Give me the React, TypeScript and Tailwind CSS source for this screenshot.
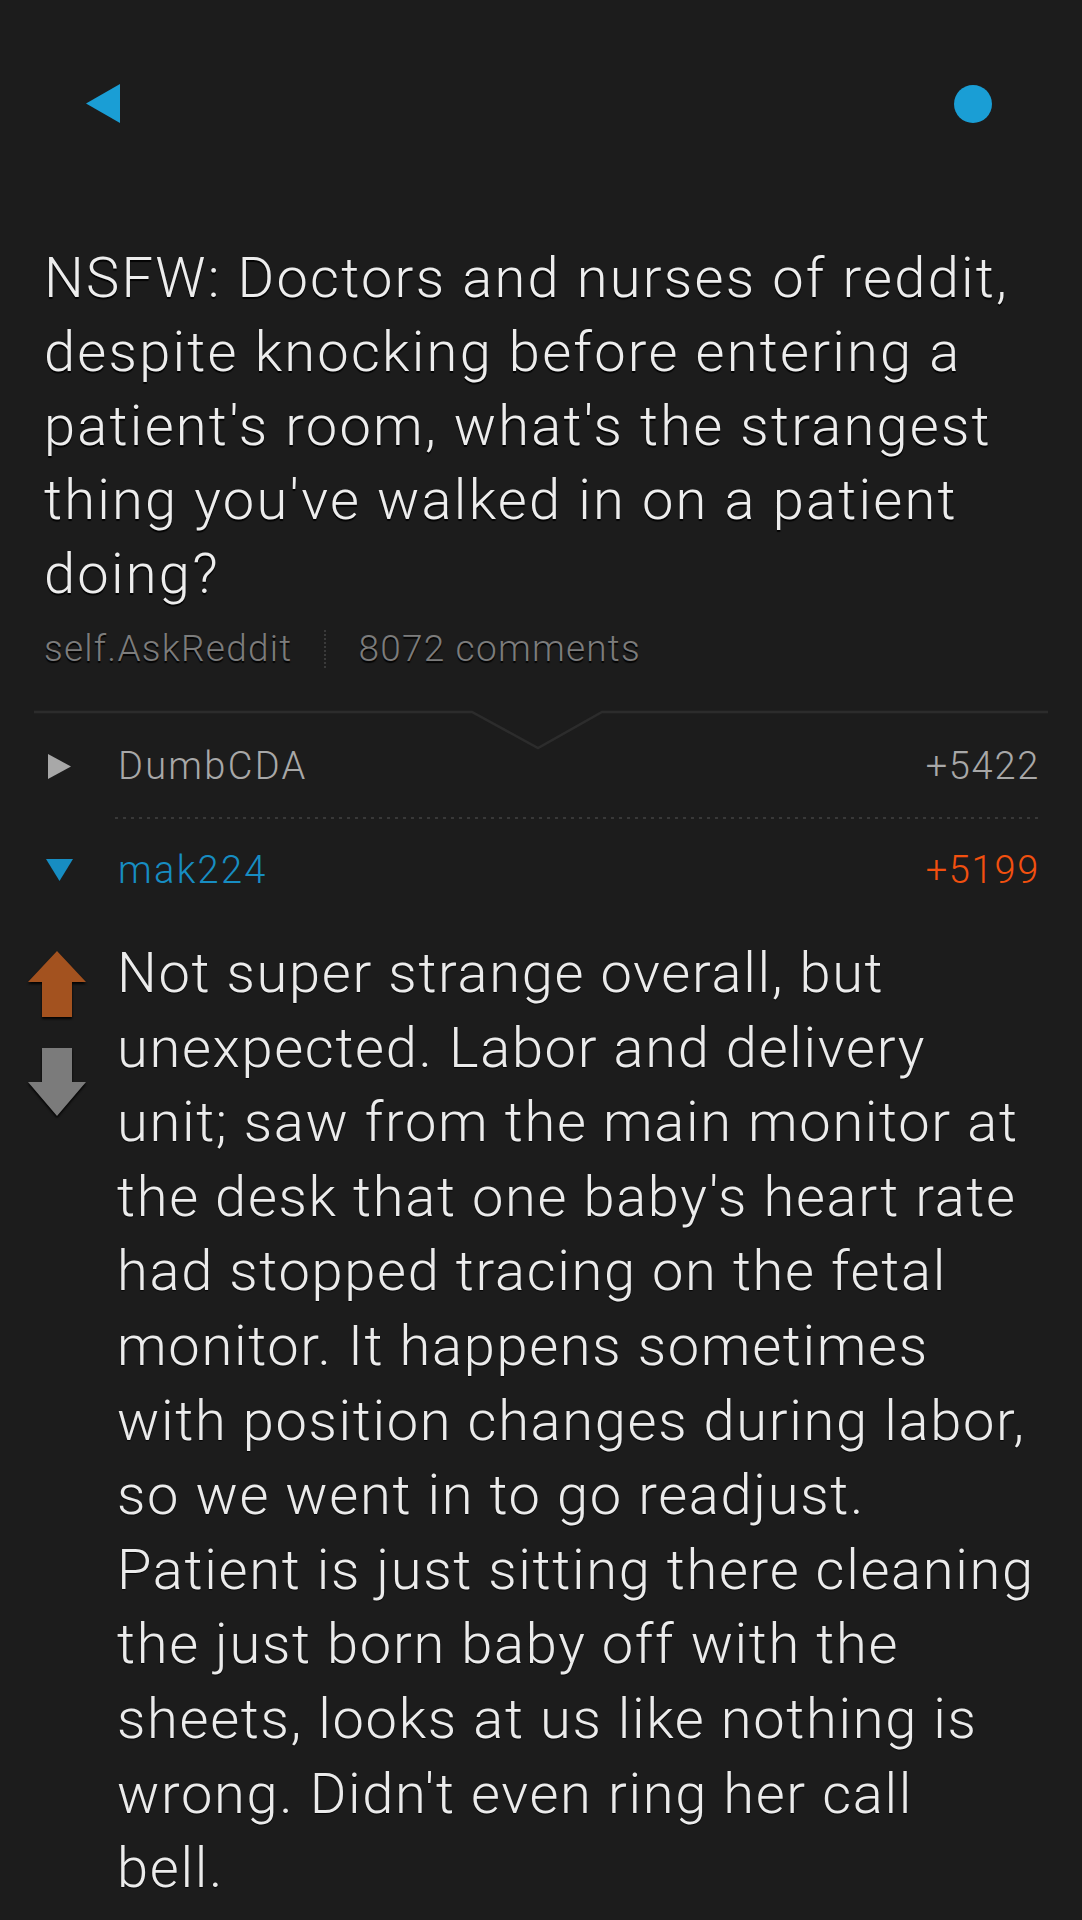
import { ReactNode } from "react";

const body =
  "Not super strange overall, but unexpected. Labor and delivery unit; saw from the main monitor at the desk that one baby's heart rate had stopped tracing on the fetal monitor. It happens sometimes with position changes during labor, so we went in to go readjust. Patient is just sitting there cleaning the just born baby off with the sheets, looks at us like nothing is wrong. Didn't even ring her call";

function Header() {
  return (
    <header className="flex items-center justify-between pl-[86px] pr-[90px] pt-[84px]">
      <button aria-label="Back" className="block">
        <svg width="34" height="39" viewBox="0 0 34 39" className="block">
          <path d="M34 0 V39 L0 19.5 Z" fill="#1a9ed5" />
        </svg>
      </button>
      <span className="block size-[38px] rounded-full bg-[#1a9ed5]" />
    </header>
  );
}

function Separator() {
  return (
    <svg
      width="1014"
      height="40"
      viewBox="0 0 1014 40"
      className="mx-[34px] -mb-[9px] block overflow-visible"
    >
      <path
        d="M0 1 H438 L504 37 L568 1 H1014"
        fill="none"
        stroke="#2c2c2c"
        strokeWidth="2.5"
      />
    </svg>
  );
}

function CommentRow({
  icon,
  author,
  score,
  authorClass,
  scoreClass,
}: {
  icon: ReactNode;
  author: string;
  score: string;
  authorClass: string;
  scoreClass: string;
}) {
  return (
    <div className="flex h-[48px] items-center pl-[46px] pr-[42px] text-[38px] leading-[48px] tracking-[0.045em]">
      <span className="flex w-[27px] justify-center">{icon}</span>
      <span className={`ml-[45px] tracking-[0.06em] ${authorClass}`}>{author}</span>
      <span className={`ml-auto ${scoreClass}`}>{score}</span>
    </div>
  );
}

function Votes() {
  return (
    <div className="flex w-[58px] shrink-0 flex-col gap-[31px] pt-[15px]">
      <svg width="58" height="66" viewBox="0 0 58 66" className="block drop-shadow-[0_2px_1px_rgba(0,0,0,0.9)]">
        <path d="M29 0 L58 31 H44 V66 H14 V31 H0 Z" fill="#a3521f" />
      </svg>
      <svg width="58" height="68" viewBox="0 0 58 68" className="block drop-shadow-[0_2px_1px_rgba(0,0,0,0.9)]">
        <path d="M14 0 H44 V34 H58 L29 68 L0 34 H14 Z" fill="#7b7b7b" />
      </svg>
    </div>
  );
}

export default function App() {
  return (
    <div className="min-h-[1920px] bg-[#1c1c1c] font-[Roboto,'Liberation_Sans',sans-serif] font-light">
      <Header />

      <section className="pl-[44px] pr-[34px]">
        <h1 className="mt-[118px] text-[56px] leading-[74px] tracking-[0.04em] text-[#ededed] [text-shadow:0_2px_1px_rgba(0,0,0,0.9)]">
          NSFW: Doctors and nurses of reddit, despite knocking before entering a patient's room, what's the strangest thing you've walked in on a patient doing?
        </h1>
        <div className="mt-[14px] flex items-center text-[37px] leading-[48px] tracking-[0.033em] text-[#7c7c7c] [text-shadow:0_2px_1px_rgba(0,0,0,0.9)]">
          <span>self.AskReddit</span>
          <span className="mx-[32px] h-[38px] border-l-2 border-dotted border-[#3a3a3a]" />
          <span>8072 comments</span>
        </div>
      </section>

      <div className="mt-[38px]">
        <Separator />
      </div>

      <CommentRow
        icon={
          <svg width="23" height="25" viewBox="0 0 23 25" className="block">
            <path d="M0 0 L23 12.5 L0 25 Z" fill="#a8a8a8" />
          </svg>
        }
        author="DumbCDA"
        score="+5422"
        authorClass="text-[#a8a8a8]"
        scoreClass="text-[#a8a8a8]"
      />

      <div className="ml-[115px] mr-[40px] mt-[27px] h-[2px] bg-[repeating-linear-gradient(to_right,#383838_0_3px,transparent_3px_8px)]" />

      <div className="mt-[27px]">
        <CommentRow
          icon={
            <svg width="27" height="22" viewBox="0 0 27 22" className="block">
              <path d="M0 0 H27 L13.5 22 Z" fill="#178dc2" />
            </svg>
          }
          author="mak224"
          score="+5199"
          authorClass="text-[#178dc2]"
          scoreClass="text-[#f2500f]"
        />
      </div>

      <article className="mt-[42px] flex pl-[28px]">
        <Votes />
        <p className="ml-[31px] w-[925px] text-[56px] leading-[74.6px] tracking-[0.03em] text-[#ebebeb] [text-shadow:0_1px_1px_rgba(0,0,0,0.8)]">
          {body}
          <br />
          bell.
        </p>
      </article>
    </div>
  );
}
